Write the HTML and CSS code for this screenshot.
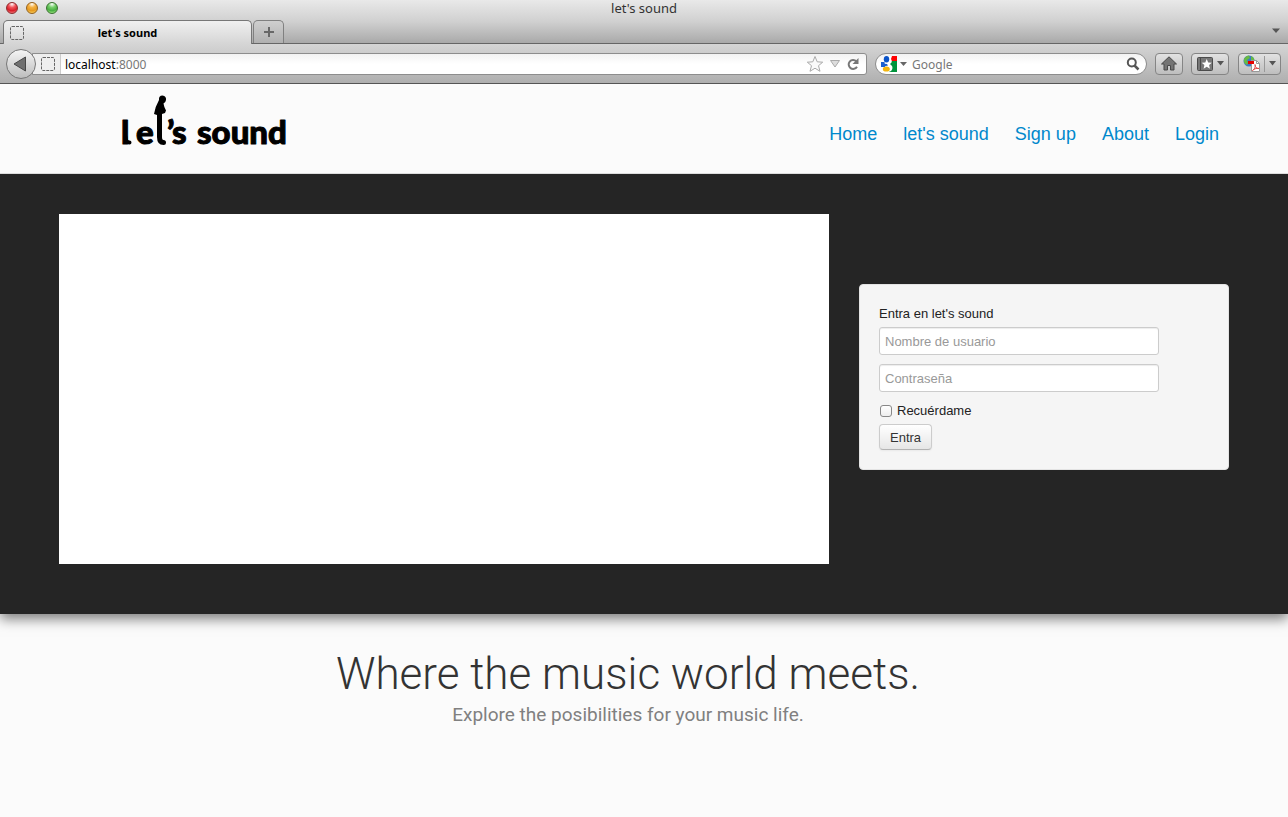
FILE: index.html
```html
<!DOCTYPE html>
<html lang="es">
<head>
<meta charset="utf-8">
<title>let's sound</title>
<link rel="stylesheet" href="styles.css">
</head>
<body>
<div class="chrome">
  <div class="tabstrip">
    <div class="titlebar">
      <div class="lights"><span class="light red"></span><span class="light amber"></span><span class="light green"></span></div>
      <span class="window-title">let's sound</span>
    </div>
    <div class="tabs">
      <div class="tab">
        <svg class="blank" width="16" height="16" viewBox="0 0 16 16"><rect x="1.5" y="1.5" width="13" height="13" rx="1.5" fill="none" stroke="#666" stroke-dasharray="3 1"/></svg>
        <span class="tab-title">let's sound</span>
      </div>
      <button class="new-tab" aria-label="New tab"><svg width="12" height="12" viewBox="0 0 12 12"><path d="M6 1v10M1 6h10" stroke="#686868" stroke-width="2"/></svg></button>
      <svg class="all-tabs" width="8" height="5" viewBox="0 0 8 5"><path d="M0 .5h8L4 5z" fill="#555"/></svg>
    </div>
  </div>
  <div class="toolbar">
    <button class="back" aria-label="Back"><svg width="14" height="16" viewBox="0 0 14 16"><path d="M1 8L12.500 1v14z" fill="#707070" stroke="#484848"/></svg></button>
    <div class="address">
      <span class="identity"><svg width="16" height="16" viewBox="0 0 16 16"><rect x="1.500" y="1.500" width="13" height="13" rx="1.500" fill="none" stroke="#666" stroke-dasharray="3 1"/></svg></span>
      <span class="url">localhost<span class="port">:8000</span></span>
      <svg width="18" height="18" viewBox="0 0 18 18"><path d="M9 1.500l2.200 5.300 5.500.4-4.200 3.500 1.500 5.600L9 13.200l-5 3.100 1.500-5.600L1.300 7.200l5.500-.4z" fill="#fafafa" stroke="#aaa"/></svg>
      <svg width="12" height="10" viewBox="0 0 12 10"><path d="M1.500 1.500h9L6 8z" fill="#ddd" stroke="#aaa"/></svg>
      <svg width="14" height="14" viewBox="0 0 14 14"><path d="M10.300 4.200A4.500 4.500 0 1 0 11 9.800" fill="none" stroke="#777" stroke-width="2"/><path d="M12.500 1v6h-6z" fill="#777"/></svg>
    </div>
    <div class="search">
      <svg width="16" height="16" viewBox="0 0 16 16"><path d="M8 0h8v6H8z" fill="#f00"/><path d="M8 5h8v11H8z" fill="#00933b"/><path d="M0 6h5v5H0z" fill="#1b5fd0"/><path d="M3 0h8l-1 3c1.500 2 .8 4-1 5l2 2c1.500 3-1 6-4 6H5c-3-.5-4-4-1-5z" fill="#fff"/><ellipse cx="5.500" cy="3.200" rx="2.700" ry="3.200" fill="#0a53c8"/><ellipse cx="5.300" cy="13" rx="3.500" ry="2.600" fill="#f2b50f"/><path d="M1 7.500l5 .5 1 1.500-4 1-2-.5z" fill="#1b5fd0"/></svg>
      <svg width="7" height="4" viewBox="0 0 7 4"><path d="M0 0h7L3.500 4z" fill="#666"/></svg>
      <input class="search-input" type="text" aria-label="Search" placeholder="Google">
      <svg width="14" height="14" viewBox="0 0 14 14"><circle cx="5.800" cy="5.500" r="4" fill="none" stroke="#555" stroke-width="2"/><path d="M8.500 8.500l4 4" stroke="#555" stroke-width="2.500"/></svg>
    </div>
    <button class="tool home" aria-label="Home page"><svg width="16" height="15" viewBox="0 0 16 15"><path d="M8 .8L15.500 8H13v6H9.500V9.500h-3V14H3V8H.5z" fill="#747474" stroke="#484848"/></svg></button>
    <button class="tool marks" aria-label="Bookmarks"><svg width="16" height="14" viewBox="0 0 16 14"><rect x=".5" y=".5" width="15" height="13" rx="1" fill="#777" stroke="#4b4b4b"/><path d="M3.500 1v12" stroke="#4b4b4b"/><path d="M9.700 2l1.500 3.400 3.600.3-2.700 2.400.8 3.600-3.200-1.900-3.100 1.900.8-3.600-2.700-2.400 3.600-.3z" fill="#fff"/></svg><svg width="7" height="5" viewBox="0 0 7 5"><path d="M0 0h7L3.500 4.500z" fill="#555"/></svg></button>
    <button class="tool pdf" aria-label="Save as PDF"><svg width="17" height="17" viewBox="0 0 17 17"><circle cx="6" cy="6" r="5.500" fill="#3b79c8"/><path d="M1 4Q3 .5 6 .5L7 3 4 5l1 3-1 2Q0 8 1 4zM8 1q3 1 3.500 4L8 5z" fill="#68ba42"/><path d="M8.500 5.500h5l3 3v8h-8z" fill="#fff" stroke="#999"/><path d="M13.500 5.500v3h3" fill="none" stroke="#999"/><path d="M9.500 15.500c3-2 3-5 2.500-6 0 3 2 4 4 4-3-.5-5 .5-6.500 2z" fill="none" stroke="#e04848"/><path d="M5 6h6v3H5z" fill="#e60000"/></svg><span class="divider"></span><svg width="7" height="5" viewBox="0 0 7 5"><path d="M0 0h7L3.500 4.500z" fill="#555"/></svg></button>
  </div>
</div>

<header class="header">
  <div class="container header-row">
    <a class="logo" href="#" aria-label="let's sound">
      <svg width="170" height="56" viewBox="0 0 170 56">
        <text class="logo-text" x="2" y="50">l</text>
        <path d="M6.500 43q0 5.500 4 5.500" fill="none" stroke="#000" stroke-width="4" stroke-linecap="round"/>
        <text class="logo-text" x="17" y="50">e</text>
        <path d="M40.500 22v21q0 5.500 4 5.500" fill="none" stroke="#000" stroke-width="5" stroke-linecap="round"/>
        <path d="M40 6Q39.500 1.500 43.500 1.500Q47.500 2 47 6Q46.500 9 44.500 9.500Q45 13 47 16.500L46 19L43 20V25H38V21L35 20Q36 13 40 6z" fill="#000"/>
        <text class="logo-text" x="48" y="50">’</text>
        <text class="logo-text" x="53" y="50">s</text>
        <text class="logo-text" x="78" y="50">sound</text>
      </svg>
    </a>
    <nav class="nav">
      <a href="#">Home</a><a href="#">let's sound</a><a href="#">Sign up</a><a href="#">About</a><a href="#">Login</a>
    </nav>
  </div>
</header>

<section class="hero">
  <div class="container hero-row">
    <div class="stage"></div>
    <form class="login">
      <label class="legend" for="user">Entra en let's sound</label>
      <input class="field" id="user" type="text" placeholder="Nombre de usuario">
      <input class="field" type="password" aria-label="Contraseña" placeholder="Contraseña">
      <label class="remember"><input class="check" type="checkbox">Recuérdame</label>
      <button class="submit" type="button">Entra</button>
    </form>
  </div>
</section>

<main class="container intro">
  <h1 class="headline">Where the music world meets.</h1>
  <p class="tagline">Explore the posibilities for your music life.</p>
</main>
</body>
</html>
```
FILE: styles.css
```css
* { box-sizing: border-box; }
body {
  margin: 0;
  background: #fbfbfb;
  color: #333;
  font: 13px/18px "Liberation Sans", Arial, sans-serif;
}
button, input { font: inherit; }
button { margin: 0; padding: 0; }
svg { display: block; flex: none; }

.chrome { font-family: "Noto Sans", sans-serif; color: #111; }
.tabstrip {
  background: linear-gradient(#e9e9e9, #d0d0d0 50%, #a9a9a9);
  border-bottom: 1px solid #666;
}
.titlebar { position: relative; height: 19px; text-align: center; }
.window-title { display: block; font-size: 13px; line-height: 16px; color: #333; }
.lights { position: absolute; left: 6px; top: 2px; display: flex; gap: 8px; }
.light { width: 12px; height: 12px; border-radius: 50%; border: 1px solid #666; }
.red { background: radial-gradient(circle at 50% 10%, #fff, #f2545a 35%, #d81e28 65%, #ff9b9b); border-color: #8c2a2c; }
.amber { background: radial-gradient(circle at 50% 10%, #fff, #f5b040 35%, #e69a20 65%, #ffe67a); border-color: #94601c; }
.green { background: radial-gradient(circle at 50% 10%, #fff, #75cf6a 35%, #48ae42 65%, #c3ff9c); border-color: #37702e; }
.tabs { display: flex; align-items: flex-start; padding: 0 8px 0 3px; }
.tab {
  position: relative;
  display: flex;
  align-items: center;
  width: 249px;
  height: 24px;
  margin: 1px 0 -1px;
  padding: 0 5px;
  border: 1px solid #777;
  border-bottom: 0;
  border-radius: 5px 5px 0 0;
  background: linear-gradient(#f0f0f0, #d5d5d5);
}
.tab-title { flex: 1; padding-right: 16px; text-align: center; font-size: 11px; font-weight: 700; color: #000; }
.new-tab {
  display: grid;
  place-items: center;
  width: 31px;
  height: 23px;
  margin: 1px auto 0 1px;
  border: 1px solid #808080;
  border-bottom: 0;
  border-radius: 5px 5px 0 0;
  background: linear-gradient(#cfcfcf, #b0b0b0);
}
.all-tabs { margin-top: 9px; }

.toolbar {
  display: flex;
  align-items: center;
  height: 40px;
  padding: 0 7px 0 6px;
  background: linear-gradient(#d5d5d5, #afafaf);
  border-bottom: 1px solid #555;
}
.back {
  display: grid;
  place-items: center;
  z-index: 1;
  width: 30px;
  height: 30px;
  margin-right: -4px;
  padding-right: 2px;
  border: 1px solid #777;
  border-radius: 50%;
  background: linear-gradient(#f5f5f5, #bdbdbd);
}
.address, .search {
  display: flex;
  align-items: center;
  height: 22px;
  border: 1px solid #8d8d8d;
  background: linear-gradient(#f2f2f2, #fff 50%);
}
.address { flex: 1; gap: 5px; padding-right: 6px; border-radius: 0 3px 3px 0; }
.identity { display: flex; align-items: center; width: 28px; height: 20px; padding-left: 7px; background: #eee; border-right: 1px solid #ccc; }
.url { flex: 1; margin-left: -1px; padding-top: 2px; font-size: 12px; color: #000; }
.port { color: #777; }
.search { width: 272px; margin: 0 8px; gap: 3px; padding: 0 6px 0 5px; border-radius: 11px; }
.search-input { flex: 1; min-width: 0; height: 20px; padding: 2px 2px 0; border: 0; outline: 0; background: none; font-size: 12px; }
.search-input::placeholder { color: #777; opacity: 1; }
.tool {
  display: flex;
  align-items: center;
  justify-content: center;
  gap: 4px;
  height: 22px;
  border: 1px solid #858585;
  border-radius: 4px;
  background: linear-gradient(#e2e2e2, #bebebe);
}
.home { width: 28px; margin-right: 8px; }
.marks { width: 38px; margin-right: 9px; }
.pdf { width: 43px; }
.divider { width: 1px; height: 16px; background: #999; }

.container { width: 100%; max-width: 1170px; margin: 0 auto; }
.header { position: relative; z-index: 1; background: #fbfbfb; border-bottom: 1px solid #ddd; }
.header-row { display: flex; justify-content: space-between; align-items: flex-start; height: 89px; padding: 10px 10px 0 60px; }
.logo-text { font: 900 33px Lato, sans-serif; fill: #000; stroke: #000; stroke-width: 1px; stroke-linejoin: round; }
.nav { display: flex; gap: 26px; padding-top: 30px; font-size: 18px; line-height: 20px; }
.nav a { color: #08c; text-decoration: none; }

.hero { padding: 40px 0 50px; background: #252525; box-shadow: 0 5px 12px rgba(0, 0, 0, .5); }
.hero-row { display: grid; grid-template-columns: 77fr 37fr; gap: 30px; }
.stage { height: 350px; background: #fff; }
.login {
  align-self: start;
  display: flex;
  flex-direction: column;
  align-items: flex-start;
  margin-top: 70px;
  padding: 20px 19px 19px;
  border: 1px solid #e3e3e3;
  border-radius: 4px;
  background: #f5f5f5;
}
.legend { margin-bottom: 4px; color: #222; }
.field {
  width: 280px;
  height: 28px;
  margin-bottom: 9px;
  padding: 4px 5px;
  border: 1px solid #ccc;
  border-radius: 3px;
  background: #fff;
  box-shadow: inset 0 1px 1px rgba(0, 0, 0, .075);
}
.field::placeholder { color: #999; opacity: 1; }
.remember { display: flex; align-items: center; gap: 5px; margin: 1px 0 4px; padding-left: 1px; color: #222; }
.check {
  appearance: none;
  width: 12px;
  height: 12px;
  margin: 0;
  border: 1px solid #888;
  border-radius: 3px;
  background: linear-gradient(#fff, #eee);
}
.submit {
  height: 26px;
  padding: 1px 10px 0;
  border: 1px solid #ccc;
  border-bottom-color: #b3b3b3;
  border-radius: 4px;
  background: linear-gradient(#fff, #e6e6e6);
  box-shadow: 0 1px 2px rgba(0, 0, 0, .05);
  color: #333;
}

.intro { padding: 36px 32px 80px 0; text-align: center; }
.headline { margin: 0; font: 300 44px/48px Roboto, sans-serif; color: #333; }
.tagline { margin: 4px 0 0; font: 400 19px/26px Roboto, sans-serif; color: #808080; }
```
